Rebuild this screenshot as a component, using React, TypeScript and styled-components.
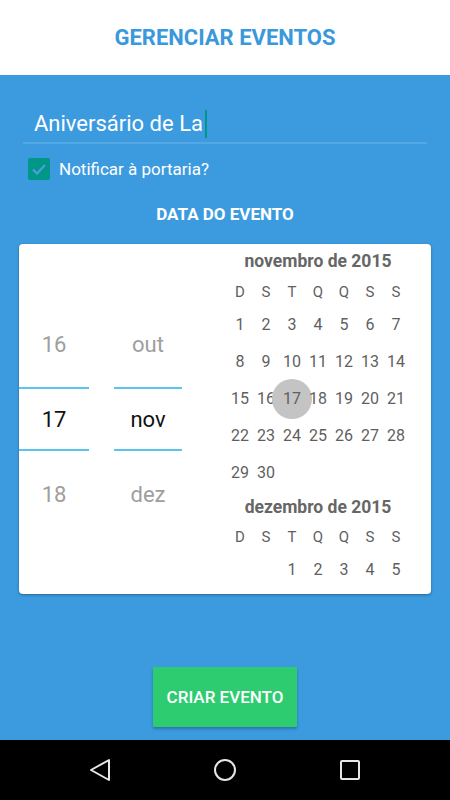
import styled, { createGlobalStyle } from 'styled-components'

const GlobalStyle = createGlobalStyle`
  html, body {
    margin: 0;
    padding: 0;
    background: #3c9bdf;
    font-family: Roboto, 'Liberation Sans', sans-serif;
  }
  * { box-sizing: border-box; }
`

const Screen = styled.div`
  width: 450px;
  height: 800px;
  display: flex;
  flex-direction: column;
  overflow: hidden;
`

const Header = styled.header`
  height: 75px;
  background: #ffffff;
  display: flex;
  align-items: center;
  justify-content: center;
`

const Title = styled.h1`
  margin: 0;
  font-size: 22px;
  font-weight: 700;
  color: #3a98dc;
`

const Main = styled.main`
  flex: 1;
  display: flex;
  flex-direction: column;
  padding: 30px 19px 13px;
`

const Field = styled.div`
  margin: 0 4px;
  height: 39px;
  padding-left: 11px;
  display: flex;
  align-items: center;
  border-bottom: 2px solid rgba(255, 255, 255, 0.12);
  font-size: 22px;
  color: #ffffff;
`

const Cursor = styled.span`
  display: inline-block;
  width: 2px;
  height: 28px;
  margin-left: 2px;
  background: #009688;
`

const CheckRow = styled.label`
  display: flex;
  align-items: center;
  gap: 9px;
  margin: 12px 0 0 9px;
  height: 26px;
  font-size: 17px;
  color: #ffffff;
`

const CheckBox = styled.span`
  width: 22px;
  height: 22px;
  border-radius: 2px;
  background: #009688;
  display: flex;
  align-items: center;
  justify-content: center;
`

const SectionLabel = styled.h2`
  margin: 22px 0 0;
  text-align: center;
  font-size: 17px;
  font-weight: 700;
  color: #ffffff;
  line-height: 20px;
`

const Card = styled.section`
  margin-top: 20px;
  height: 350px;
  background: #ffffff;
  border-radius: 4px;
  box-shadow: 0 1px 3px rgba(0, 0, 0, 0.35);
  display: flex;
`

const Pickers = styled.div`
  display: flex;
  gap: 25px;
  align-items: center;
`

const Wheel = styled.div<{ $width: number }>`
  width: ${(p) => p.$width}px;
  display: flex;
  flex-direction: column;
  gap: 11px;
`

const WheelItem = styled.div<{ $selected?: boolean }>`
  height: 64px;
  display: flex;
  align-items: center;
  justify-content: center;
  font-size: 22px;
  color: ${(p) => (p.$selected ? '#111111' : '#9e9e9e')};
  border-top: 2px solid ${(p) => (p.$selected ? '#5bc4ee' : 'transparent')};
  border-bottom: 2px solid ${(p) => (p.$selected ? '#5bc4ee' : 'transparent')};
`

const Calendar = styled.div`
  margin-left: 45px;
  width: 182px;
  display: flex;
  flex-direction: column;
`

const MonthTitle = styled.div<{ $height: number }>`
  height: ${(p) => p.$height}px;
  display: flex;
  align-items: center;
  justify-content: center;
  font-size: 17.5px;
  font-weight: 700;
  color: #666666;
`

const Week = styled.div<{ $height: number }>`
  display: grid;
  grid-template-columns: repeat(7, 26px);
  height: ${(p) => p.$height}px;
`

const Cell = styled.span<{ $selected?: boolean; $head?: boolean }>`
  position: relative;
  display: flex;
  align-items: center;
  justify-content: center;
  font-size: ${(p) => (p.$head ? '15px' : '16px')};
  font-weight: 400;
  color: #5f5f5f;

  &::before {
    content: '';
    display: ${(p) => (p.$selected ? 'block' : 'none')};
    position: absolute;
    width: 40px;
    height: 40px;
    border-radius: 50%;
    background: #c4c4c4;
    left: 50%;
    top: 50%;
    transform: translate(-50%, -50%);
  }
`

const CellText = styled.span`
  position: relative;
`

const Footer = styled.div`
  margin-top: auto;
  display: flex;
  justify-content: center;
`

const CreateButton = styled.button`
  width: 144px;
  height: 60px;
  border: none;
  border-radius: 1px;
  background: #2ecc71;
  color: #ffffff;
  font-family: inherit;
  font-size: 17px;
  font-weight: 500;
  box-shadow: 0 2px 3px rgba(0, 0, 0, 0.25);
`

const NavBar = styled.nav`
  height: 60px;
  background: #000000;
  display: flex;
  align-items: center;
  justify-content: center;
  gap: 101px;
`

const weekdays = ['D', 'S', 'T', 'Q', 'Q', 'S', 'S']

const buildWeeks = (offset: number, days: number) => {
  const cells: (number | null)[] = Array(offset).fill(null)
  for (let d = 1; d <= days; d++) cells.push(d)
  const weeks: (number | null)[][] = []
  for (let i = 0; i < cells.length; i += 7) weeks.push(cells.slice(i, i + 7))
  return weeks
}

const Month = ({
  name,
  weeks,
  titleHeight,
  selected,
}: {
  name: string
  weeks: (number | null)[][]
  titleHeight: number
  selected?: number
}) => (
  <>
    <MonthTitle $height={titleHeight}>{name}</MonthTitle>
    <Week $height={28}>
      {weekdays.map((w, i) => (
        <Cell key={i} $head>
          {w}
        </Cell>
      ))}
    </Week>
    {weeks.map((week, i) => (
      <Week key={i} $height={37}>
        {week.map((d, j) => (
          <Cell key={j} $selected={d === selected}>
            <CellText>{d ?? ''}</CellText>
          </Cell>
        ))}
      </Week>
    ))}
  </>
)

export default function App() {
  const november = buildWeeks(0, 30)
  const december = [[null, null, 1, 2, 3, 4, 5]]

  return (
    <Screen>
      <GlobalStyle />
      <Header>
        <Title>GERENCIAR EVENTOS</Title>
      </Header>

      <Main>
        <Field>
          Aniversário de La
          <Cursor />
        </Field>

        <CheckRow>
          <CheckBox>
            <svg width="18" height="18" viewBox="0 0 18 18">
              <path d="M3 9.5 L7 13.5 L15 5" fill="none" stroke="#4a9fd8" strokeWidth="2.4" />
            </svg>
          </CheckBox>
          Notificar à portaria?
        </CheckRow>

        <SectionLabel>DATA DO EVENTO</SectionLabel>

        <Card>
          <Pickers>
            <Wheel $width={70}>
              <WheelItem>16</WheelItem>
              <WheelItem $selected>17</WheelItem>
              <WheelItem>18</WheelItem>
            </Wheel>
            <Wheel $width={68}>
              <WheelItem>out</WheelItem>
              <WheelItem $selected>nov</WheelItem>
              <WheelItem>dez</WheelItem>
            </Wheel>
          </Pickers>
          <Calendar>
            <Month name="novembro de 2015" weeks={november} titleHeight={34} selected={17} />
            <Month name="dezembro de 2015" weeks={december} titleHeight={32} />
          </Calendar>
        </Card>

        <Footer>
          <CreateButton>CRIAR EVENTO</CreateButton>
        </Footer>
      </Main>

      <NavBar>
        <svg width="24" height="24" viewBox="0 0 24 24">
          <path d="M21 2 L21 22 L3 12 Z" fill="none" stroke="#e6e6e6" strokeWidth="2" strokeLinejoin="round" />
        </svg>
        <svg width="24" height="24" viewBox="0 0 24 24">
          <circle cx="12" cy="12" r="10" fill="none" stroke="#e6e6e6" strokeWidth="2" />
        </svg>
        <svg width="24" height="24" viewBox="0 0 24 24">
          <rect x="3" y="3" width="18" height="18" rx="1" fill="none" stroke="#e6e6e6" strokeWidth="2" />
        </svg>
      </NavBar>
    </Screen>
  )
}
